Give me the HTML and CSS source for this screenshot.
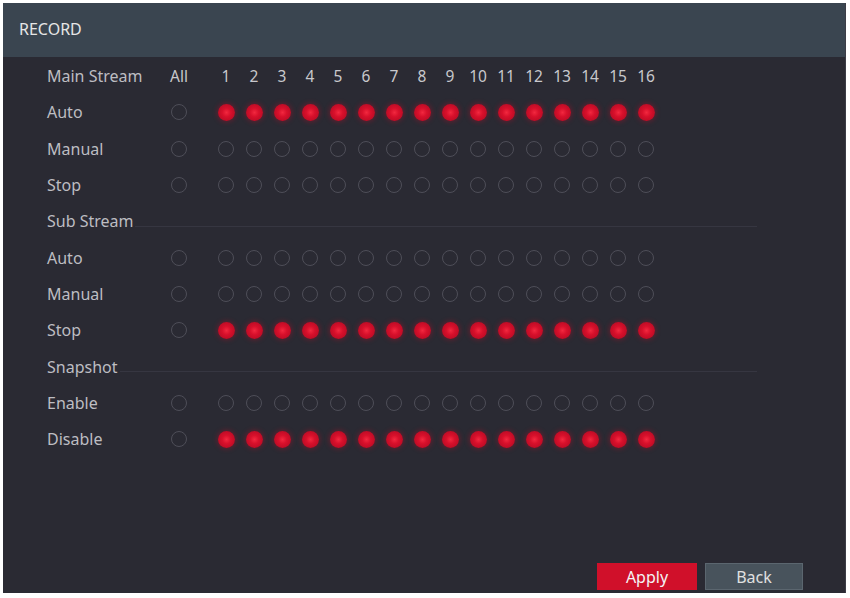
FILE: index.html
```html
<!DOCTYPE html>
<html lang="en">
<head>
<meta charset="UTF-8">
<title>Record</title>
<link rel="stylesheet" href="styles.css">
</head>
<body>
<div class="window">
    <div class="title">RECORD</div>
    <div class="content">
        <div class="row head">
            <span class="label">Main Stream</span>
            <span class="cell">All</span>
            <span class="gap"></span>
            <span class="cell">1</span><span class="cell">2</span><span class="cell">3</span><span class="cell">4</span>
            <span class="cell">5</span><span class="cell">6</span><span class="cell">7</span><span class="cell">8</span>
            <span class="cell">9</span><span class="cell">10</span><span class="cell">11</span><span class="cell">12</span>
            <span class="cell">13</span><span class="cell">14</span><span class="cell">15</span><span class="cell">16</span>
        </div>
        <div class="row" data-on="1"><span class="label">Auto</span></div>
        <div class="row" data-on="0"><span class="label">Manual</span></div>
        <div class="row" data-on="0"><span class="label">Stop</span></div>

        <div class="section"><span class="label">Sub Stream</span><span class="line"></span></div>
        <div class="row" data-on="0"><span class="label">Auto</span></div>
        <div class="row" data-on="0"><span class="label">Manual</span></div>
        <div class="row" data-on="1"><span class="label">Stop</span></div>

        <div class="section"><span class="label">Snapshot</span><span class="line"></span></div>
        <div class="row" data-on="0"><span class="label">Enable</span></div>
        <div class="row" data-on="1"><span class="label">Disable</span></div>

        <div class="footer">
            <button class="btn apply">Apply</button>
            <button class="btn back">Back</button>
        </div>
    </div>
</div>
<script>
    // fill each option row with the "All" radio and 16 channel radios
    var rows = document.querySelectorAll(".row[data-on]");
    for (var i = 0; i < rows.length; i++) {
        var on = rows[i].getAttribute("data-on") === "1";
        var html = '<span class="cell"><i class="radio"></i></span><span class="gap"></span>';
        for (var c = 1; c <= 16; c++) {
            html += '<span class="cell"><i class="radio' + (on ? ' on' : '') + '"></i></span>';
        }
        rows[i].insertAdjacentHTML("beforeend", html);
    }
</script>
</body>
</html>
```

FILE: styles.css
```css
body {
    margin: 0;
    padding: 3px 0 0 3px;
    background: #fff;
    font-family: "Noto Sans", "Open Sans", sans-serif;
}
.window {
    width: 842px;
    height: 590px;
    background: #2a2a33;
    border-right: 1px solid #3c3c46;
    display: flex;
    flex-direction: column;
}
.title {
    height: 54px;
    line-height: 52px;
    padding-left: 16px;
    background: #3a4550;
    color: #e6e6e6;
    font-size: 16px;
}
.content {
    flex: 1;
    display: flex;
    flex-direction: column;
    padding: 1px 0 3px 44px;
}
.row {
    display: grid;
    grid-template-columns: 118px 28px 19px repeat(16, 28px);
    align-items: center;
    height: 36.3px;
    color: #bdbdc2;
    font-size: 16px;
}
.head .cell {
    color: #c8c8cc;
    font-size: 15.5px;
}
.cell {
    display: flex;
    justify-content: center;
    align-items: center;
}
.section {
    display: flex;
    align-items: center;
    width: 710px;
    height: 36.3px;
    color: #bdbdc2;
    font-size: 16px;
}
.section .line {
    flex: 1;
    height: 1px;
    margin: 10px 0 0 2px;
    background: #363641;
}
.radio {
    display: block;
    width: 14px;
    height: 14px;
    border: 1.5px solid #4e4e58;
    border-radius: 50%;
}
.radio.on {
    width: 17px;
    height: 17px;
    border: none;
    background: radial-gradient(circle, #f2283f 0, #d8102b 35%, #bf0c26 70%, #a0091f 100%);
    box-shadow: 0 0 5px 1px rgba(190, 15, 40, 0.4);
}
.footer {
    margin-top: auto;
    display: flex;
    gap: 8px;
    padding-left: 550px;
}
.btn {
    width: 100px;
    height: 27px;
    border: none;
    font-family: "Noto Sans", sans-serif;
    font-size: 16px;
    padding: 0;
}
.apply {
    background: #d0102a;
    color: #f4f4f4;
}
.back {
    width: 98px;
    background: #48535c;
    border: 1px solid #5b666f;
    color: #e0e0e0;
}
```
